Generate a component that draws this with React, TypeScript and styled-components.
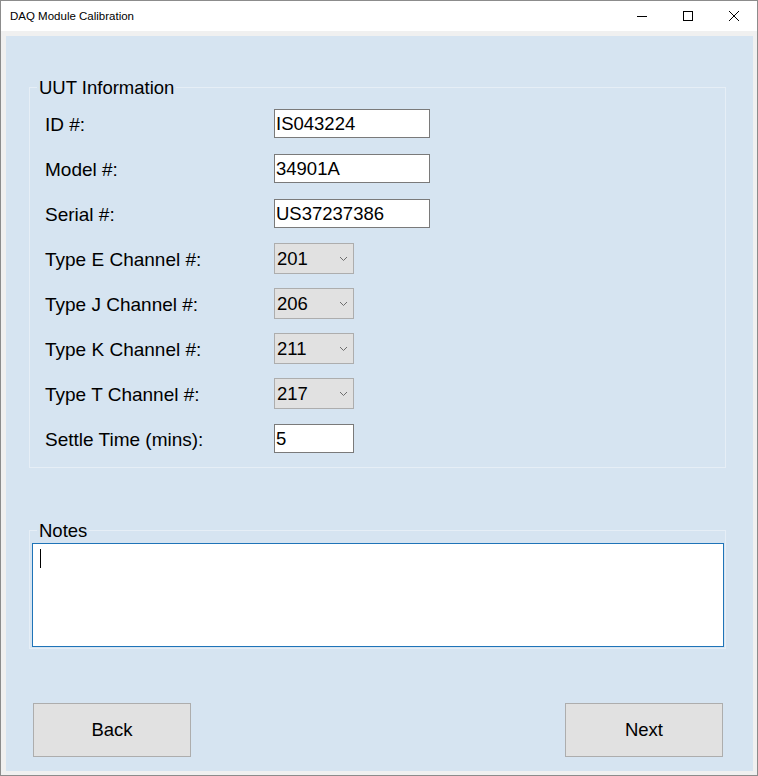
import styled, { createGlobalStyle } from "styled-components";

const GlobalStyle = createGlobalStyle`
  html, body {
    margin: 0;
    padding: 0;
    background: #ffffff;
  }
  * {
    box-sizing: border-box;
  }
`;

const Window = styled.div`
  width: 758px;
  height: 776px;
  display: flex;
  flex-direction: column;
  border: 1px solid #8c8c8c;
  background: #f0f0f0;
  font-family: "Liberation Sans", Arial, sans-serif;
  color: #000;
`;

const TitleBar = styled.div`
  height: 30px;
  display: flex;
  align-items: center;
  background: #ffffff;
  flex-shrink: 0;
`;

const Title = styled.div`
  flex: 1;
  padding-left: 9px;
  font-size: 11.5px;
  color: #000;
`;

const Controls = styled.div`
  display: flex;
  height: 100%;
`;

const ControlButton = styled.div`
  width: 46px;
  height: 100%;
  display: flex;
  align-items: center;
  justify-content: center;
`;

const Frame = styled.div`
  flex: 1;
  display: flex;
  padding: 5px 4px 4px 5px;
  min-height: 0;
`;

const Content = styled.div`
  flex: 1;
  display: flex;
  flex-direction: column;
  background: #d6e4f1;
`;

const Group = styled.fieldset<{ $top: number }>`
  margin: ${(p) => p.$top}px 27px 0 23px;
  border: 1px solid #e6eef6;
  min-width: 0;
`;

const InfoGroup = styled(Group)`
  padding: 10px 0 13px 15px;
  display: grid;
  grid-template-columns: 229px auto;
  row-gap: 14px;
  align-items: center;
  justify-items: start;
`;

const NotesGroup = styled(Group)`
  padding: 2px 1px 1px 2px;
`;

const Legend = styled.legend<{ $offset: number }>`
  margin-left: ${(p) => p.$offset}px;
  padding: 0 2px;
  font-size: 18.5px;
  line-height: 22px;
  position: relative;
  top: 1px;
`;

const Label = styled.div`
  font-size: 19px;
  line-height: 31px;
  height: 31px;
  display: flex;
  align-items: center;
  padding-top: 2px;
`;

const TextBox = styled.input<{ $width: number }>`
  width: ${(p) => p.$width}px;
  height: 29px;
  margin: 1px 0;
  border: 1px solid #7a7a7a;
  background: #ffffff;
  padding: 0 0 0 1px;
  font-family: "Liberation Sans", Arial, sans-serif;
  font-size: 18.5px;
  color: #000;
  outline: none;
`;

const Dropdown = styled.div`
  width: 80px;
  height: 31px;
  display: flex;
  align-items: center;
  justify-content: space-between;
  padding: 0 5px 0 2px;
  background: #e1e1e1;
  border: 1px solid #adadad;
  font-size: 18.5px;
`;

const NotesBox = styled.div`
  height: 104px;
  border: 1px solid #1f74b8;
  background: #ffffff;
  padding: 5px 7px;
`;

const Caret = styled.span`
  display: block;
  width: 1px;
  height: 19px;
  background: #000;
`;

const ButtonRow = styled.div`
  margin-top: auto;
  display: flex;
  justify-content: space-between;
  padding: 0 30px 14px 27px;
`;

const Button = styled.div`
  width: 158px;
  height: 54px;
  display: flex;
  align-items: center;
  justify-content: center;
  background: #e1e1e1;
  border: 1px solid #adadad;
  font-size: 18.5px;
`;

const Chevron = () => (
  <svg width="9" height="6" viewBox="0 0 9 6">
    <polyline points="1,1 4.5,4.5 8,1" fill="none" stroke="#6d6d6d" strokeWidth="1" />
  </svg>
);

const fields: { label: string; kind: "text" | "select"; value: string; width?: number }[] = [
  { label: "ID #:", kind: "text", value: "IS043224", width: 156 },
  { label: "Model #:", kind: "text", value: "34901A", width: 156 },
  { label: "Serial #:", kind: "text", value: "US37237386", width: 156 },
  { label: "Type E Channel #:", kind: "select", value: "201" },
  { label: "Type J Channel #:", kind: "select", value: "206" },
  { label: "Type K Channel #:", kind: "select", value: "211" },
  { label: "Type T Channel #:", kind: "select", value: "217" },
  { label: "Settle Time (mins):", kind: "text", value: "5", width: 80 },
];

export default function App() {
  return (
    <>
      <GlobalStyle />
      <Window>
        <TitleBar>
          <Title>DAQ Module Calibration</Title>
          <Controls>
            <ControlButton>
              <svg width="10" height="10" viewBox="0 0 10 10">
                <line x1="0" y1="5.5" x2="10" y2="5.5" stroke="#000" strokeWidth="1" />
              </svg>
            </ControlButton>
            <ControlButton>
              <svg width="10" height="10" viewBox="0 0 10 10">
                <rect x="0.5" y="0.5" width="9" height="9" fill="none" stroke="#000" strokeWidth="1" />
              </svg>
            </ControlButton>
            <ControlButton>
              <svg width="10" height="10" viewBox="0 0 10 10">
                <path d="M0 0 L10 10 M10 0 L0 10" stroke="#000" strokeWidth="1" />
              </svg>
            </ControlButton>
          </Controls>
        </TitleBar>
        <Frame>
          <Content>
            <InfoGroup $top={40}>
              <Legend $offset={-8}>UUT Information</Legend>
              {fields.map((f) => (
                <>
                  <Label key={f.label}>{f.label}</Label>
                  {f.kind === "text" ? (
                    <TextBox $width={f.width ?? 156} defaultValue={f.value} readOnly />
                  ) : (
                    <Dropdown>
                      <span>{f.value}</span>
                      <Chevron />
                    </Dropdown>
                  )}
                </>
              ))}
            </InfoGroup>
            <NotesGroup $top={51}>
              <Legend $offset={5}>Notes</Legend>
              <NotesBox>
                <Caret />
              </NotesBox>
            </NotesGroup>
            <ButtonRow>
              <Button>Back</Button>
              <Button>Next</Button>
            </ButtonRow>
          </Content>
        </Frame>
      </Window>
    </>
  );
}
